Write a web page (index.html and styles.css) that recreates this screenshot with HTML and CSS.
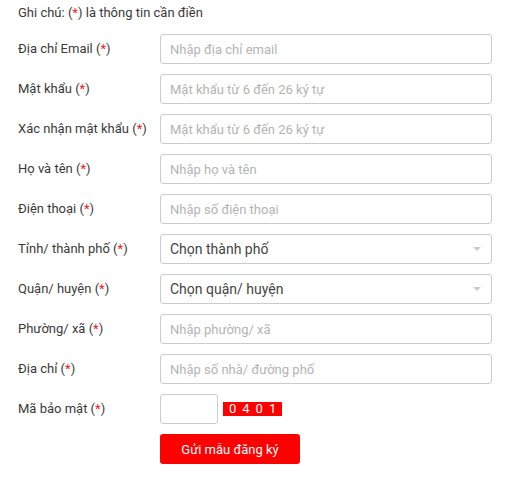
FILE: index.html
```html
<!DOCTYPE html>
<html lang="vi">
<head>
<meta charset="utf-8">
<link rel="stylesheet" href="styles.css">
</head>
<body>
<form class="form">
  <p class="note">Ghi chú: <span class="req">(<i>*</i>)</span> là thông tin cần điền</p>
  <div class="row"><label>Địa chỉ Email <span class="req">(<i>*</i>)</span></label><input class="field" placeholder="Nhập địa chỉ email"></div>
  <div class="row"><label>Mật khẩu <span class="req">(<i>*</i>)</span></label><input class="field" placeholder="Mật khẩu từ 6 đến 26 ký tự"></div>
  <div class="row"><label>Xác nhận mật khẩu <span class="req">(<i>*</i>)</span></label><input class="field" placeholder="Mật khẩu từ 6 đến 26 ký tự"></div>
  <div class="row"><label>Họ và tên <span class="req">(<i>*</i>)</span></label><input class="field" placeholder="Nhập họ và tên"></div>
  <div class="row"><label>Điện thoại <span class="req">(<i>*</i>)</span></label><input class="field" placeholder="Nhập số điện thoại"></div>
  <div class="row"><label>Tỉnh/ thành phố <span class="req">(<i>*</i>)</span></label><div class="select"><span>Chọn thành phố</span><b class="arrow"></b></div></div>
  <div class="row"><label>Quận/ huyện <span class="req">(<i>*</i>)</span></label><div class="select"><span>Chọn quận/ huyện</span><b class="arrow"></b></div></div>
  <div class="row"><label>Phường/ xã <span class="req">(<i>*</i>)</span></label><input class="field" placeholder="Nhập phường/ xã"></div>
  <div class="row"><label>Địa chỉ <span class="req">(<i>*</i>)</span></label><input class="field" placeholder="Nhập số nhà/ đường phố"></div>
  <div class="row"><label>Mã bảo mật <span class="req">(<i>*</i>)</span></label><div class="captcha-wrap"><input class="field captcha-input"><span class="captcha">0401</span></div></div>
  <div class="row"><span></span><button type="button" class="submit">Gửi mẫu đăng ký</button></div>
</form>
</body>
</html>
```
FILE: styles.css
```css
* { box-sizing: border-box; }
body {
  margin: 0;
  background: #fff;
  font-family: Roboto, "Noto Sans", Arial, sans-serif;
  font-size: 13px;
  color: #3a3a3a;
}
.form {
  padding: 3px 20px 0 18px;
  display: flex;
  flex-direction: column;
  gap: 10px;
}
.note {
  margin: 0 0 1px;
  line-height: 20px;
}
.req i { font-style: normal; color: #e22; }
.row {
  display: grid;
  grid-template-columns: 142px 332px;
  align-items: center;
  height: 30px;
}
.row label { line-height: 20px; }
.field {
  height: 30px;
  width: 100%;
  border: 1px solid #ccc;
  border-radius: 3px;
  padding: 0 9px;
  font-family: inherit;
  font-size: 13px;
  color: #333;
  outline: none;
}
.field::placeholder { color: #b4b4b4; }
.select {
  height: 30px;
  border: 1px solid #ccc;
  border-radius: 3px;
  padding: 0 9px;
  display: flex;
  align-items: center;
  justify-content: space-between;
  font-size: 14px;
  color: #444;
}
.arrow {
  width: 0;
  height: 0;
  border-left: 4px solid transparent;
  border-right: 4px solid transparent;
  border-top: 4px solid #ccc;
  margin-right: 1px;
}
.captcha-wrap {
  display: flex;
  align-items: center;
  gap: 5px;
}
.captcha-input { width: 58px; }
.captcha {
  background: #f00;
  color: #fff;
  width: 59px;
  height: 14px;
  line-height: 14px;
  font-size: 13px;
  letter-spacing: 6px;
  text-align: center;
  padding-left: 6px;
}
.submit {
  width: 140px;
  height: 30px;
  border: 0;
  border-radius: 3px;
  background: #f00;
  color: #fff;
  font-family: inherit;
  font-size: 13px;
  padding: 0;
}
```
